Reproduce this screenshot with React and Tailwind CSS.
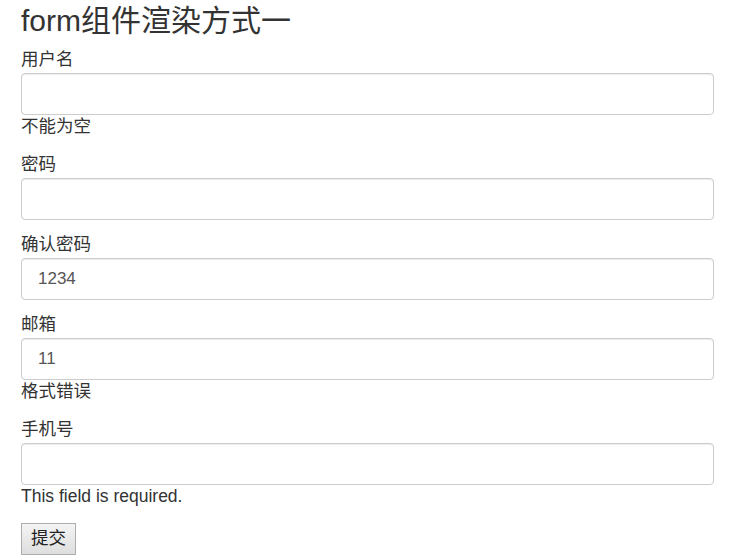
import React from 'react';

const fields = [
  { label: '用户名', value: '', error: '不能为空' },
  { label: '密码', value: '', error: null },
  { label: '确认密码', value: '1234', error: null },
  { label: '邮箱', value: '11', error: '格式错误' },
  { label: '手机号', value: '', error: 'This field is required.' },
];

const App = () => {
  return (
    <div
      className="px-[21px] text-[17.5px] text-[#333] bg-white min-h-[555px]"
      style={{ fontFamily: '"Liberation Sans", Arial, "Noto Sans CJK SC", sans-serif' }}
    >
      <h1 className="text-[30px] leading-[34px] pt-[4px] h-[47px] font-normal">form组件渲染方式一</h1>
      <form onSubmit={(e) => e.preventDefault()}>
        {fields.map((f) => (
          <div key={f.label} className={f.error ? 'mb-[15px]' : 'mb-[12px]'}>
            <label className="block leading-[24px] mb-[2px]">{f.label}</label>
            <input
              type="text"
              defaultValue={f.value}
              className="block w-full h-[42px] px-[16px] border border-[#ccc] rounded-[4px] text-[17px] text-[#555] shadow-[inset_0_1px_1px_rgba(0,0,0,0.075)] outline-none"
            />
            {f.error && <div className="leading-[22px]">{f.error}</div>}
          </div>
        ))}
        <button
          type="submit"
          className="mt-[1px] h-[32px] px-[9px] border border-[#adadad] bg-gradient-to-b from-[#f4f4f4] to-[#dedede] text-[17.5px] text-[#222] leading-none"
        >
          提交
        </button>
      </form>
    </div>
  );
};

export default App;
